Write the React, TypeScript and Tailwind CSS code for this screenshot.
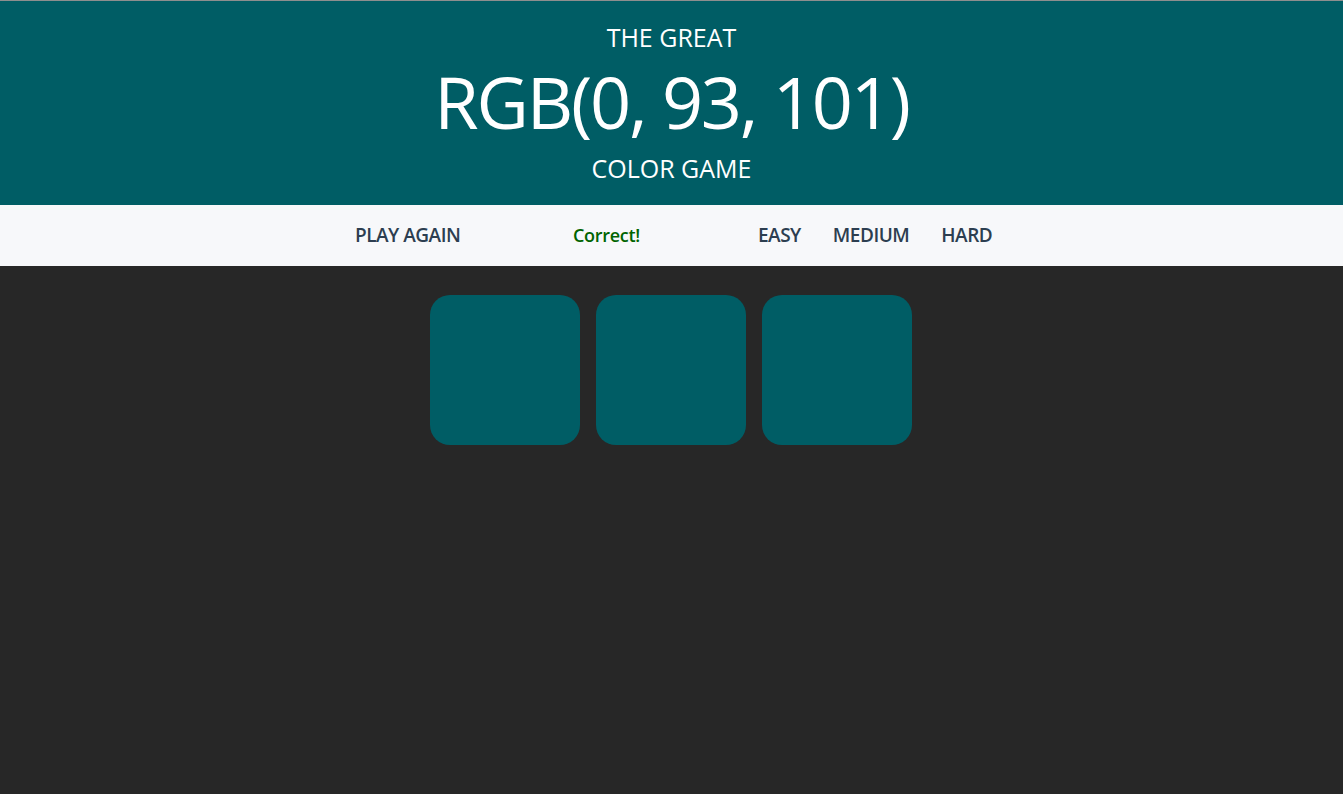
import { useState } from "react";

const COLOR = "rgb(0, 93, 101)";

export default function App() {
  const [mode, setMode] = useState<"easy" | "medium" | "hard">("easy");
  const squares = [COLOR, COLOR, COLOR];

  return (
    <div className="min-h-screen bg-[#272727] font-['Open_Sans',sans-serif] border-t border-[#8e8e8e]">
      {/* header */}
      <header className="bg-[#005d65] text-white text-center pt-[20px] h-[204px]">
        <div className="text-[25px] leading-[32px]">THE GREAT</div>
        <div className="text-[72px] leading-[97px] tracking-[-2.2px]">RGB(0, 93, 101)</div>
        <div className="text-[25px] leading-[34px] pt-[1px]">COLOR GAME</div>
      </header>

      {/* nav */}
      <nav className="bg-[#f7f8fa] h-[61px] flex items-center justify-center text-[#2c3e50] font-semibold text-[19px] tracking-[-0.5px]">
        <div className="flex items-center w-[640px] ml-[7px]">
          <button className="w-[218px] text-left uppercase">PLAY AGAIN</button>
          <span className="w-[185px] text-left text-[#006400] text-[18px] tracking-[-0.3px]">Correct!</span>
          <div className="flex gap-[32px]">
            {(["easy", "medium", "hard"] as const).map((m) => (
              <button key={m} onClick={() => setMode(m)} className="uppercase">
                {m}
              </button>
            ))}
          </div>
        </div>
      </nav>

      {/* squares */}
      <main className="flex justify-center gap-[16px] pt-[29px] pr-[2px]">
        {squares.map((c, i) => (
          <div
            key={i + mode}
            className="w-[150px] h-[150px] rounded-[20px]"
            style={{ backgroundColor: c }}
          />
        ))}
      </main>
    </div>
  );
}
